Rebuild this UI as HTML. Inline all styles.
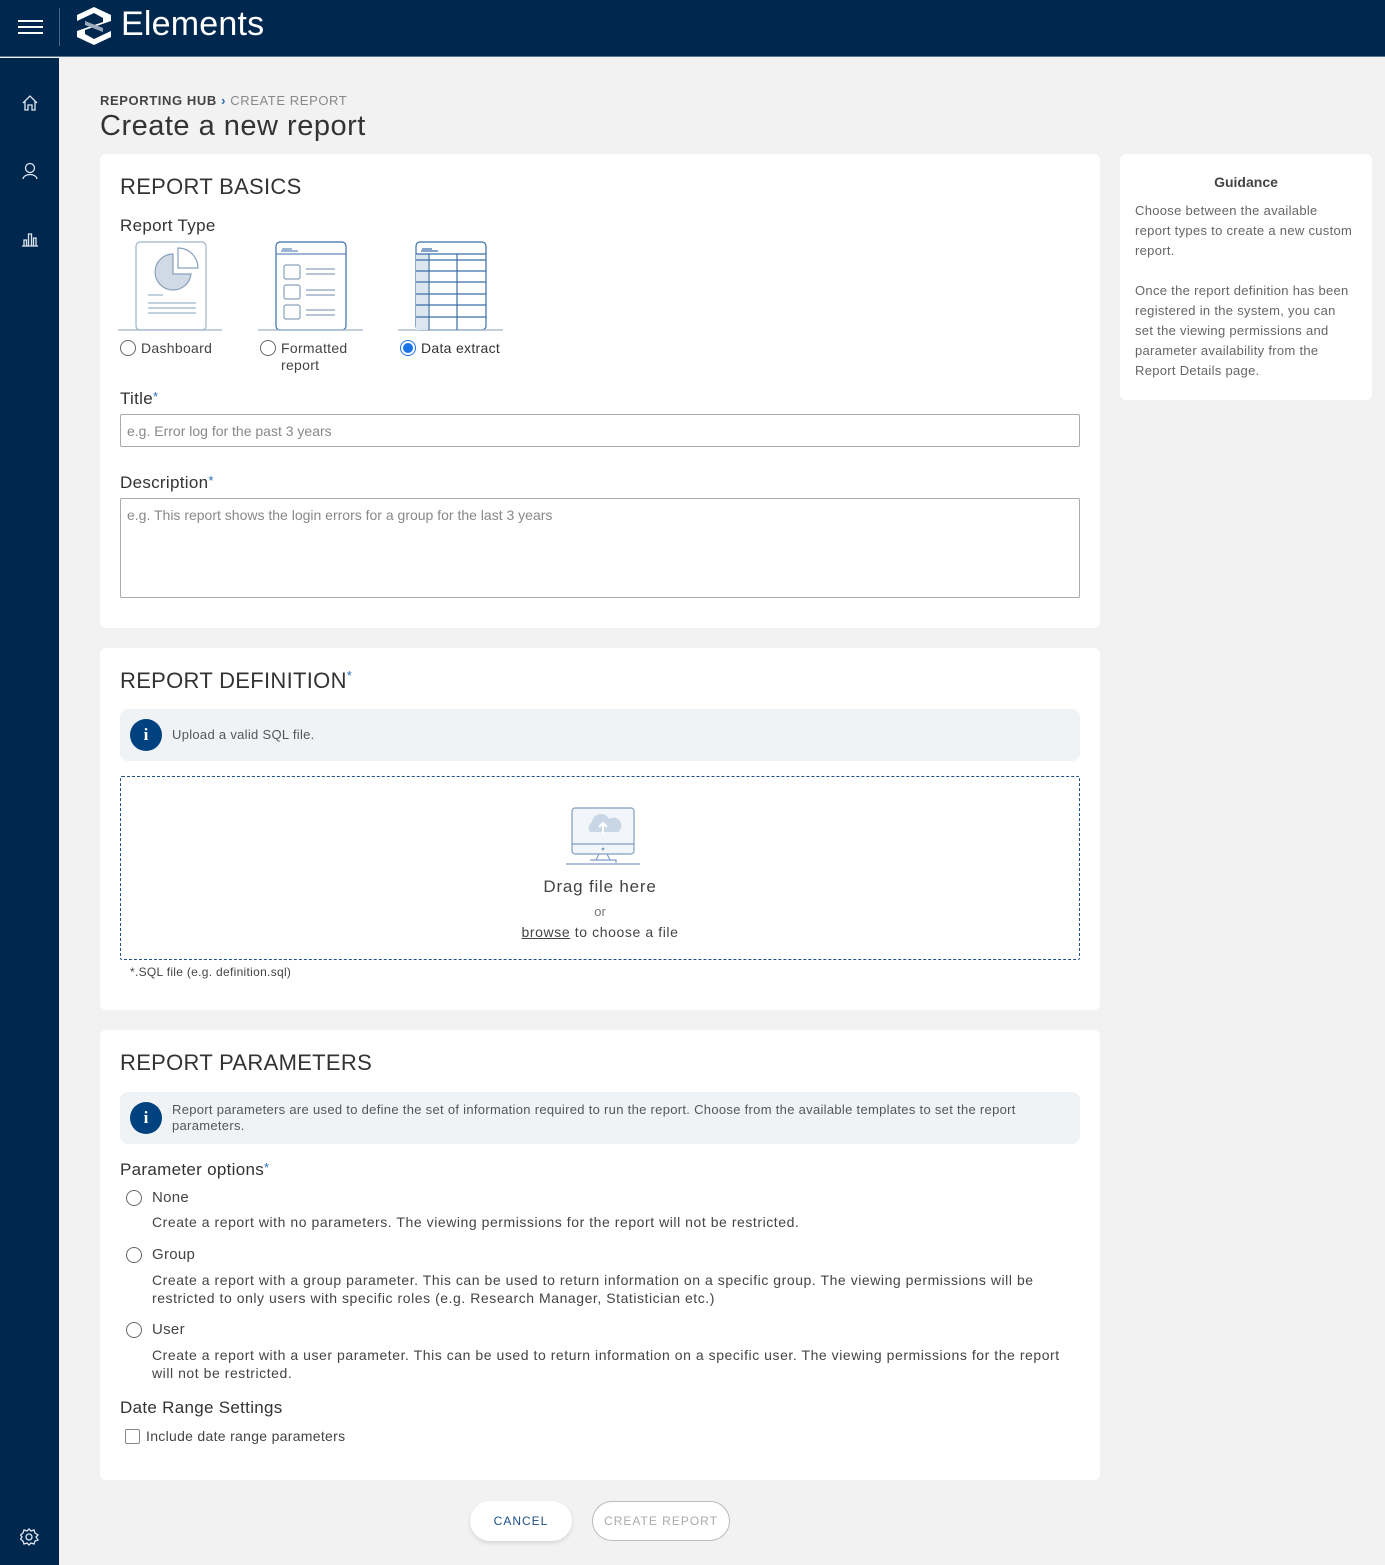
<!DOCTYPE html>
<html><head><meta charset="utf-8"><style>
*{box-sizing:border-box;margin:0;padding:0}
body{width:1385px;height:1565px;background:#f2f2f2;font-family:"Liberation Sans",sans-serif;color:#333;position:relative;overflow:hidden}
.hdr{position:absolute;left:0;top:0;width:1385px;height:57px;background:#00284f;border-bottom:1px solid #5a7592}
.side{position:absolute;left:0;top:58px;width:59px;height:1507px;background:#00284f}
.card{position:absolute;left:100px;width:1000px;background:#fff;border-radius:6px}
.abs{position:absolute}
h2{position:absolute;left:20px;font-weight:normal;font-size:22px;color:#333;letter-spacing:.3px}
.lbl{position:absolute;font-size:17px;color:#333;letter-spacing:.3px}
.star{color:#2a6cb6;font-size:13px;vertical-align:top}
.inp{position:absolute;left:20px;width:960px;border:1px solid #aaa;border-radius:2px;font-size:14px;color:#888;padding:8px 6px}
.radio{position:absolute;width:16px;height:16px;border:1px solid #666;border-radius:50%;background:#fff}
.info{position:absolute;left:20px;width:960px;background:#f0f3f6;border-radius:8px}
.ic{position:absolute;left:10px;width:32px;height:32px;border-radius:50%;background:#00427f;color:#fff;font-weight:bold;font-family:"Liberation Serif",serif;text-align:center;line-height:32px;font-size:17px}
.t{position:absolute;font-size:14px;color:#444;letter-spacing:.3px}
.d{letter-spacing:.55px}
</style></head><body>
<div class="hdr">
 <div class="abs" style="left:18px;top:20px;width:25px;height:2px;background:#fff"></div>
 <div class="abs" style="left:18px;top:26px;width:25px;height:2px;background:#fff"></div>
 <div class="abs" style="left:18px;top:32px;width:25px;height:2px;background:#fff"></div>
 <div class="abs" style="left:59px;top:8px;width:1px;height:38px;background:#4a6585"></div>
 <svg class="abs" style="left:75px;top:6px" width="38" height="40" viewBox="0 0 38 40"><path d="M19 1 L36 9 L36 15 L10 24 L10 28 L19 33 L36 25 L36 31 L19 39 L2 31 L2 25 L28 16 L28 12 L19 7 L2 15 L2 9 Z" fill="#fff"/><path d="M10 15 L28 22 L28 26 L10 19 Z" fill="#9aa9bc"/></svg>
 <div class="abs" style="left:121px;top:5px;font-size:34px;color:#fff;letter-spacing:.2px">Elements</div>
</div>
<div class="side">
 <svg class="abs" style="left:21px;top:36px" width="18" height="18" viewBox="0 0 18 18" fill="none" stroke="#dfe6ee" stroke-width="1.3"><path d="M2 9 L9 2 L16 9 M4 7 V16 H7 V11 H11 V16 H14 V7"/></svg>
 <svg class="abs" style="left:21px;top:104px" width="18" height="18" viewBox="0 0 18 18" fill="none" stroke="#dfe6ee" stroke-width="1.3"><circle cx="9" cy="6" r="4.5"/><path d="M2 17 C3 11 15 11 16 17"/></svg>
 <svg class="abs" style="left:21px;top:172px" width="18" height="18" viewBox="0 0 18 18" fill="none" stroke="#dfe6ee" stroke-width="1.3"><path d="M1 16 H17 M3 16 V10 H5.5 V16 M7.5 16 V4 H10.5 V16 M12.5 16 V8 H15 V16"/></svg>
 <svg class="abs" style="left:20px;top:1470px" width="20" height="20" viewBox="0 0 20 20" fill="none" stroke="#dfe6ee" stroke-width="1.3"><circle cx="9" cy="9" r="3"/><path d="M9 1 L11 3 L14 2 L15 5 L18 7 L16 9 L18 12 L15 13 L14 16 L11 15 L9 17 L7 15 L4 16 L3 13 L0.5 11 L2 9 L0.5 7 L3 5 L4 2 L7 3 Z"/></svg>
</div>

<div class="abs" style="left:100px;top:93px;font-size:13px;letter-spacing:.6px;color:#444;font-weight:bold">REPORTING HUB <span style="color:#2a6cb6">›</span> <span style="font-weight:normal;color:#888">CREATE REPORT</span></div>
<div class="abs" style="left:100px;top:110px;font-size:29px;color:#333;letter-spacing:.5px">Create a new report</div>

<div class="card" style="top:154px;height:474px">
 <h2 style="top:20px">REPORT BASICS</h2>
 <div class="lbl" style="left:20px;top:62px">Report Type</div>
 <svg class="abs" style="left:18px;top:86px" width="390" height="92" viewBox="0 0 390 92" fill="none" stroke="#3a6ea8" stroke-width="1.2">
  <g stroke="#9fb3cb"><rect x="18" y="2" width="70" height="88" rx="4"/><path d="M0 90 H104"/><path d="M30 55 H45 M30 63 H78 M30 68 H78 M30 73 H78"/></g>
  <path d="M55 14 A18 18 0 1 0 73 34 L55 34 Z" fill="#cfdae6" stroke="#8aa0bc"/><path d="M60 8 V28 H80 A20 20 0 0 0 60 8 Z" fill="#fff" stroke="#8aa0bc"/>
  <rect x="158" y="2" width="70" height="88" rx="4"/><path d="M140 90 H245" stroke="#9fb3cb"/><path d="M158 14 H228 M164 9 H174 M163 11 H180" stroke-width="1"/>
  <g stroke="#8aa0bc"><rect x="166" y="25" width="16" height="14" rx="2"/><rect x="166" y="45" width="16" height="14" rx="2"/><rect x="166" y="65" width="16" height="14" rx="2"/><path d="M188 29 H217 M188 34 H217 M188 50 H217 M188 55 H217 M188 70 H217 M188 75 H217"/></g>
  <rect x="298" y="2" width="70" height="88" rx="4"/><path d="M280 90 H385" stroke="#9fb3cb"/><rect x="298" y="14" width="12" height="76" fill="#dde5ee" stroke="none"/>
  <path d="M298 14 H368 M298 20 H368 M298 31 H368 M298 42 H368 M298 54 H368 M298 65 H368 M298 77 H368 M311 14 V90 M339 14 V90 M304 9 H314 M303 11 H320"/>
 </svg>
 <div class="radio" style="left:20px;top:186px"></div><div class="t" style="left:41px;top:186px">Dashboard</div>
 <div class="radio" style="left:160px;top:186px"></div><div class="t" style="left:181px;top:186px;line-height:17px">Formatted<br>report</div>
 <div class="radio" style="left:300px;top:186px;border:1px solid #1a73e8"><div style="margin:2px;width:10px;height:10px;border-radius:50%;background:#1a73e8"></div></div><div class="t" style="left:321px;top:186px;color:#333">Data extract</div>
 <div class="lbl" style="left:20px;top:235px">Title<span class="star">*</span></div>
 <div class="inp" style="top:260px;height:33px">e.g. Error log for the past 3 years</div>
 <div class="lbl" style="left:20px;top:319px">Description<span class="star">*</span></div>
 <div class="inp" style="top:344px;height:100px">e.g. This report shows the login errors for a group for the last 3 years</div>
</div>

<div class="card" style="top:648px;height:362px">
 <h2 style="top:20px">REPORT DEFINITION<span class="star">*</span></h2>
 <div class="info" style="top:61px;height:52px"><div class="ic" style="top:10px">i</div><div class="t" style="left:52px;top:18px;font-size:13px;color:#555">Upload a valid SQL file.</div></div>
 <div class="abs" style="left:20px;top:128px;width:960px;height:184px;border:1px dashed #1f4f86;border-radius:2px"></div>
 <svg class="abs" style="left:462px;top:158px" width="80" height="62" viewBox="0 0 80 62" fill="none" stroke="#7f9ec2" stroke-width="1.2"><rect x="10" y="2" width="62" height="46" rx="3" fill="#f2f5f9"/><path d="M10 38 H72"/><path d="M28 26 A7 7 0 0 1 30 16 A9 9 0 0 1 47 13 A7 7 0 0 1 56 26 Z" fill="#c9d6e6" stroke="none"/><path d="M41 28 V17 M37 21 L41 17 L45 21" stroke="#fff" stroke-width="2"/><path d="M37 48 L34 54 H48 L45 48 M28 54 H54 V57 M4 58 H78" /><circle cx="41" cy="43" r=".8" fill="#7f9ec2"/></svg>
 <div class="abs" style="left:0;width:1000px;text-align:center;top:229px;font-size:17px;color:#444;letter-spacing:.8px">Drag file here</div>
 <div class="abs" style="left:0;width:1000px;text-align:center;top:256px;font-size:13px;color:#777">or</div>
 <div class="abs" style="left:0;width:1000px;text-align:center;top:276px;font-size:14px;color:#444;letter-spacing:.6px"><span style="text-decoration:underline">browse</span> to choose a file</div>
 <div class="t" style="left:30px;top:317px;font-size:12px">*.SQL file (e.g. definition.sql)</div>
</div>

<div class="card" style="top:1030px;height:450px">
 <h2 style="top:20px">REPORT PARAMETERS</h2>
 <div class="info" style="top:62px;height:52px"><div class="ic" style="top:10px">i</div><div class="t" style="left:52px;top:10px;font-size:13px;color:#555;line-height:16px;width:880px">Report parameters are used to define the set of information required to run the report. Choose from the available templates to set the report parameters.</div></div>
 <div class="lbl" style="left:20px;top:130px">Parameter options<span class="star">*</span></div>
 <div class="radio" style="left:26px;top:160px"></div><div class="t" style="left:52px;top:159px;font-size:15px">None</div>
 <div class="t d" style="left:52px;top:184px">Create a report with no parameters. The viewing permissions for the report will not be restricted.</div>
 <div class="radio" style="left:26px;top:217px"></div><div class="t" style="left:52px;top:216px;font-size:15px">Group</div>
 <div class="t d" style="left:52px;top:241px;line-height:18px;width:920px">Create a report with a group parameter. This can be used to return information on a specific group. The viewing permissions will be restricted to only users with specific roles (e.g. Research Manager, Statistician etc.)</div>
 <div class="radio" style="left:26px;top:292px"></div><div class="t" style="left:52px;top:291px;font-size:15px">User</div>
 <div class="t d" style="left:52px;top:316px;line-height:18px;width:930px">Create a report with a user parameter. This can be used to return information on a specific user. The viewing permissions for the report will not be restricted.</div>
 <div class="lbl" style="left:20px;top:368px">Date Range Settings</div>
 <div class="abs" style="left:25px;top:399px;width:15px;height:15px;border:1px solid #888;border-radius:2px"></div>
 <div class="t" style="left:46px;top:398px">Include date range parameters</div>
</div>

<div class="abs" style="left:1120px;top:154px;width:252px;height:246px;background:#fff;border-radius:6px">
 <div class="abs" style="left:0;width:252px;text-align:center;top:20px;font-size:14px;font-weight:bold;color:#444">Guidance</div>
 <div class="abs" style="left:15px;top:47px;width:218px;font-size:13px;line-height:20px;color:#666;letter-spacing:.3px">Choose between the available report types to create a new custom report.<br><br>Once the report definition has been registered in the system, you can set the viewing permissions and parameter availability from the Report Details page.</div>
</div>

<div class="abs" style="left:470px;top:1501px;width:102px;height:40px;border-radius:20px;background:#fff;box-shadow:0 2px 4px rgba(0,0,0,.12);text-align:center;line-height:40px;font-size:12px;letter-spacing:1px;color:#1f4f86">CANCEL</div>
<div class="abs" style="left:592px;top:1501px;width:138px;height:40px;border-radius:20px;background:#fff;border:1px solid #bbb;text-align:center;line-height:38px;font-size:12px;letter-spacing:1px;color:#aaa">CREATE REPORT</div>
</body></html>
